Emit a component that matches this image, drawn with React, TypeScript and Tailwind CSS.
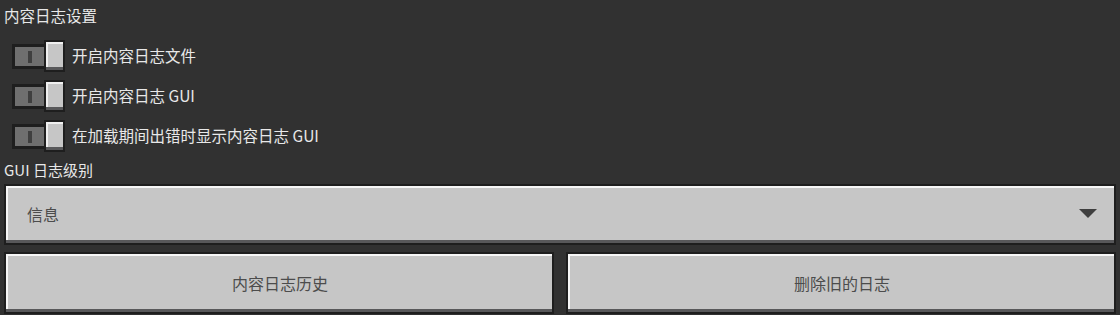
import React from "react";

const font = { fontFamily: '"Noto Sans CJK SC", "Noto Sans", sans-serif' };

function Toggle() {
  return (
    <div className="relative w-[54px] h-[32px] shrink-0">
      <div className="absolute left-0 top-[4px] w-[36px] h-[25px] bg-[#1e1e1e] p-[3px]">
        <div className="w-full h-full bg-[#6f6f6f] flex items-center justify-center">
          <div className="w-[4px] h-[12px] bg-[#3f3f3f]" />
        </div>
      </div>
      <div className="absolute left-[32px] top-0 w-[21px] h-[32px] bg-[#1e1e1e] p-[2px]">
        <div className="w-full h-full flex flex-col">
          <div className="flex-1 bg-[#c6c6c6] border-t-2 border-l-2 border-[#f0f0f0]" />
          <div className="h-[3px] bg-[#58585a]" />
        </div>
      </div>
    </div>
  );
}

function McButton({ children, className = "" }: { children: React.ReactNode; className?: string }) {
  return (
    <div className={"bg-[#1e1e1e] p-[2px] flex " + className}>
      <div className="flex-1 flex flex-col">
        <div className="flex-1 bg-[#c6c6c6] border-t-2 border-l-2 border-[#f6f6f6] flex items-center">
          {children}
        </div>
        <div className="h-[3px] bg-[#58585a]" />
      </div>
    </div>
  );
}

export default function App() {
  return (
    <div className="w-[1120px] h-[315px] bg-[#313131] px-[4px] leading-none" style={font}>
      <div className="h-[40px] flex items-start pt-[8px] text-[#e8e8e8] text-[15.5px]">内容日志设置</div>
      <div className="flex flex-col gap-[8px] pl-[8px]">
        {["开启内容日志文件", "开启内容日志 GUI", "在加载期间出错时显示内容日志 GUI"].map((t) => (
          <div key={t} className="flex items-center gap-[6px] h-[32px]">
            <Toggle />
            <span className="text-[#e8e8e8] text-[15.5px]">{t}</span>
          </div>
        ))}
      </div>
      <div className="h-[32px] flex items-center text-[#e8e8e8] text-[15px] pt-[3px]">GUI 日志级别</div>
      <McButton className="h-[61px]">
        <div className="flex-1 flex items-center justify-between pl-[19px] pr-[17px] text-[#4c4c4c] text-[16px]">
          <span>信息</span>
          <svg width="18" height="10" viewBox="0 0 18 10">
            <polygon points="0,0 18,0 9,9" fill="#3f3f3f" />
          </svg>
        </div>
      </McButton>
      <div className="flex gap-[12px] mt-[7px]">
        <McButton className="flex-1 h-[62px]">
          <span className="flex-1 text-center text-[#4c4c4c] text-[16px]">内容日志历史</span>
        </McButton>
        <McButton className="flex-1 h-[62px]">
          <span className="flex-1 text-center text-[#4c4c4c] text-[16px]">删除旧的日志</span>
        </McButton>
      </div>
    </div>
  );
}
